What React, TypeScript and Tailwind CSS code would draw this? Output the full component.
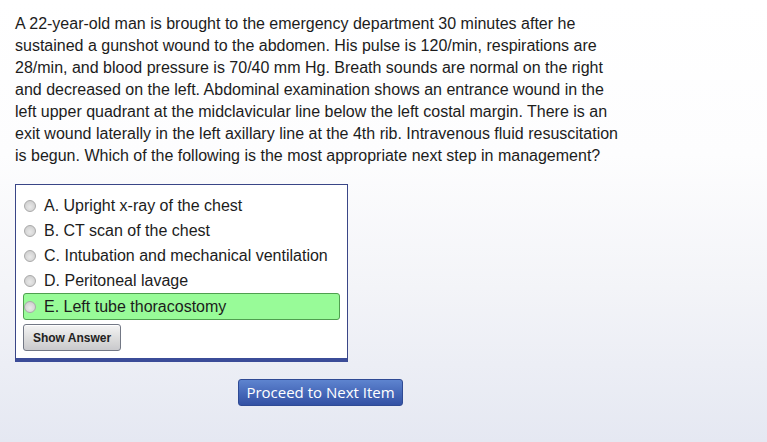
const stem =
  "A 22-year-old man is brought to the emergency department 30 minutes after he sustained a gunshot wound to the abdomen. His pulse is 120/min, respirations are 28/min, and blood pressure is 70/40 mm Hg. Breath sounds are normal on the right and decreased on the left. Abdominal examination shows an entrance wound in the left upper quadrant at the midclavicular line below the left costal margin. There is an exit wound laterally in the left axillary line at the 4th rib. Intravenous fluid resuscitation is begun. Which of the following is the most appropriate next step in management?";

const options = [
  { key: "A", label: "Upright x-ray of the chest" },
  { key: "B", label: "CT scan of the chest" },
  { key: "C", label: "Intubation and mechanical ventilation" },
  { key: "D", label: "Peritoneal lavage" },
  { key: "E", label: "Left tube thoracostomy", correct: true },
];

interface OptionRowProps {
  letter: string;
  label: string;
  correct?: boolean;
}

const OptionRow = ({ letter, label, correct }: OptionRowProps) => {
  return (
    <div
      className={`flex h-[25px] items-center rounded-[3px] border ${
        correct ? "h-[27px] border-[#4f9f4f] bg-[#98fb98]" : "border-transparent"
      }`}
    >
      <span className="ml-0 size-[12px] shrink-0 rounded-full border border-[#a9a9a9] bg-[radial-gradient(circle_at_50%_60%,#e9e9e9_0%,#d2d2d2_70%,#c4c4c4_100%)]" />
      <span className="ml-[8px] text-[16px] leading-[25px] text-[#1c1c1c]">
        {letter}. {label}
      </span>
    </div>
  );
};

const App = () => {
  return (
    <div className="h-screen min-h-[442px] w-full bg-[linear-gradient(to_bottom,#ffffff_0%,#fdfdfe_35%,#f3f4f8_65%,#e5e8f2_100%)] font-['Liberation_Sans',Arial,sans-serif]">
      <div className="px-[15px] pt-[13px]">
        <p className="w-[612px] text-[16px] leading-[22px] text-[#1c1c1c]">
          {stem}
        </p>

        <div className="mt-[17px] w-[333px] border border-b-[4px] border-[#3a4687] border-b-[#3b4c98] bg-white px-[7px] pb-[7px] pt-[8px]">
          {options.map((o) => (
            <OptionRow
              key={o.key}
              letter={o.key}
              label={o.label}
              correct={o.correct}
            />
          ))}
          <button className="mt-[4px] h-[27px] w-[98px] rounded-[3px] border border-[#737885] bg-[linear-gradient(to_bottom,#f4f4f4,#dcdcdc_55%,#c9c9cc)] text-[12px] font-bold text-[#222] shadow-[inset_0_1px_0_#fff]">
            Show Answer
          </button>
        </div>

        <div className="flex w-[611px] justify-center pt-[17px]">
          <button className="h-[27px] w-[165px] rounded-[3px] border border-[#2f4a94] bg-[linear-gradient(to_bottom,#5e84cf,#4567b8_55%,#3351a4)] font-['Open_Sans',sans-serif] text-[15px] leading-none text-white">
            Proceed to Next Item
          </button>
        </div>
      </div>
    </div>
  );
};

export default App;
